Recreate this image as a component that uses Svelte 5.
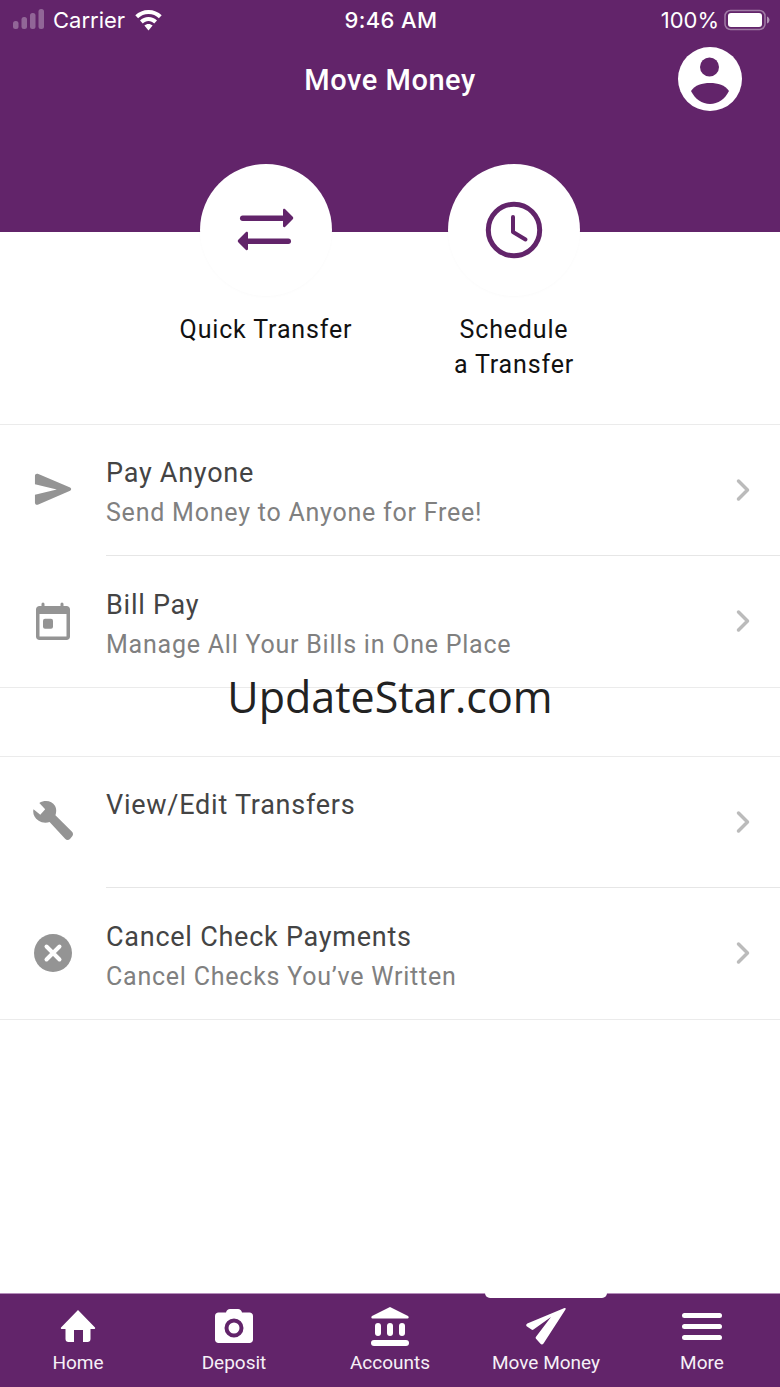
<script lang="ts">
  const rows = [
    [
      { icon: "send", title: "Pay Anyone", sub: "Send Money to Anyone for Free!" },
      { icon: "calendar", title: "Bill Pay", sub: "Manage All Your Bills in One Place" }
    ],
    [
      { icon: "wrench", title: "View/Edit Transfers", sub: "" },
      { icon: "cancel", title: "Cancel Check Payments", sub: "Cancel Checks You’ve Written" }
    ]
  ];
  const tabs = [
    { icon: "home", label: "Home" },
    { icon: "camera", label: "Deposit" },
    { icon: "bank", label: "Accounts" },
    { icon: "plane", label: "Move Money", active: true },
    { icon: "menu", label: "More" }
  ];
</script>

<div class="page">
  <header>
    <div class="status">
      <div class="status-left">
        <svg class="signal" width="34" height="22" viewBox="0 0 34 22">
          <rect x="1" y="12" width="5.500" height="8" rx="2.500" />
          <rect x="9.500" y="8" width="5.500" height="12" rx="2.500" />
          <rect x="18" y="4" width="5.500" height="16" rx="2.500" />
          <rect x="26.500" y="0" width="5.500" height="20" rx="2.500" />
        </svg>
        <span class="carrier">Carrier</span>
        <svg class="wifi" width="29" height="21" viewBox="0 0 28 21" fill="#fff">
          <path d="M14 0C8.800 0 4.200 2 .8 5.200l2.800 3C6.300 5.600 10 4 14 4s7.700 1.600 10.400 4.200l2.800-3C23.800 2 19.200 0 14 0z" />
          <path d="M14 7c-3.300 0-6.300 1.300-8.500 3.400l2.800 3C9.800 12 11.800 11 14 11s4.200 1 5.700 2.400l2.800-3C20.300 8.300 17.300 7 14 7z" />
          <path d="M14 14c-1.600 0-3 .6-4.100 1.600L14 20.500l4.100-4.900C17 14.600 15.600 14 14 14z" />
        </svg>
      </div>
      <span class="time">9:46 AM</span>
      <div class="status-right">
        <span class="pct">100%</span>
        <svg width="46" height="22" viewBox="0 0 46 22">
          <rect x="1" y="1.500" width="40" height="19" rx="5.500" fill="none" stroke="#fff" stroke-opacity="0.4" stroke-width="1.500" />
          <rect x="4" y="4" width="34" height="14" rx="3" fill="#fff" />
          <path d="M43 7.500c1.500.5 2.500 2 2.500 3.500s-1 3-2.500 3.500z" fill="#fff" fill-opacity="0.5" />
        </svg>
      </div>
    </div>
    <div class="title-bar">
      <h1>Move Money</h1>
      <svg class="avatar" width="64" height="64" viewBox="0 0 64 64">
        <circle cx="32" cy="32" r="32" fill="#fff" />
        <circle cx="31.500" cy="20" r="9.500" fill="#62246a" />
        <path d="M13 44C17 38 24 36 32 36s15 2 19 8c-4 8-11 13-19 13s-15-5-19-13z" fill="#62246a" />
      </svg>
    </div>
  </header>

  <section class="actions">
    <div class="action">
      <div class="circle">
        <svg width="60" height="48" viewBox="0 0 60 48" fill="#62246a">
          <rect x="4" y="9.500" width="45" height="5.500" rx="2.700" />
          <path d="M47 4c0-1 1-1.500 2-1l7.500 7.500c1 .9 1 2.100 0 3L49 21c-1 .5-2 0-2-1z" />
          <rect x="6" y="32.500" width="49" height="5.500" rx="2.700" />
          <path d="M12 27c0-1-1-1.500-2-1l-7.500 7.500c-1 .9-1 2.100 0 3L10 44c1 .5 2 0 2-1z" />
        </svg>
      </div>
      <span>Quick Transfer</span>
    </div>
    <div class="action">
      <div class="circle">
        <svg width="58" height="58" viewBox="0 0 58 58" fill="none" stroke="#62246a">
          <circle cx="29" cy="29" r="25.700" stroke-width="5" />
          <path d="M28 16v15l12.500 7.500" stroke-width="4" stroke-linecap="round" stroke-linejoin="round" />
        </svg>
      </div>
      <span>Schedule<br />a Transfer</span>
    </div>
  </section>

  {#each rows as group}
    <ul class="list">
      {#each group as row}
        <li>
          <div class="row-icon">
            {#if row.icon === "send"}
              <svg width="38" height="33" viewBox="0 0 40 34" fill="#949494">
                <path d="M1 2.500C1 .8 2.500 0 4 .5L38 15c1.500.8 1.500 2.600 0 3.300L4 33c-1.500.5-3-.3-3-2v-8.500l23-5.500-23-5.500z" />
              </svg>
            {:else if row.icon === "calendar"}
              <svg width="34" height="38" viewBox="0 0 34 38" fill="#949494">
                <path d="M5.500 4V2a1.500 1.500 0 0 1 3 0v2h16V2a1.500 1.500 0 0 1 3 0v2h3C32.500 4 34 5.500 34 7.500v27c0 2-1.500 3.500-3.500 3.500h-27C1.500 38 0 36.500 0 34.500v-27C0 5.500 1.500 4 3.500 4zM3.500 12v22.500h27V12z" fill-rule="evenodd" />
                <rect x="7" y="16.700" width="10" height="10" rx="2" />
              </svg>
            {:else if row.icon === "wrench"}
              <svg class="wrench" width="41" height="41" viewBox="0 0 42 42" fill="#949494">
                <path d="M1.500 9.500 8.500 15l5-5.500-6-6.500C13 -.5 20.500 .5 23.500 6c1.800 3.500 1.500 6.500.5 9.500l17 17c1.300 1.300 1.300 3.200.2 4.700l-2.300 2.800c-1.500 1.500-3.500 1.500-5-.2L18 22.500c-3.500 1.200-7.800 1-11.500-1.500C2.500 18.500 .5 14 1.500 9.500z" />
              </svg>
            {:else}
              <svg width="38" height="38" viewBox="0 0 38 38">
                <circle cx="19" cy="19" r="19" fill="#949494" />
                <path d="M12.500 12.500l13 13M25.500 12.500l-13 13" stroke="#fff" stroke-width="4" stroke-linecap="round" />
              </svg>
            {/if}
          </div>
          <div class="row-body">
            <div class="row-title">{row.title}</div>
            {#if row.sub}<div class="row-sub">{row.sub}</div>{/if}
          </div>
          <svg class="chevron" width="14" height="24" viewBox="0 0 14 24" fill="none" stroke="#bbb" stroke-width="3.500" stroke-linecap="round" stroke-linejoin="round">
            <path d="M2.500 3l9 9-9 9" />
          </svg>
        </li>
      {/each}
    </ul>
  {/each}

  <nav>
    {#each tabs as tab}
      <div class="tab" class:active={tab.active}>
        <div class="tab-icon">
          {#if tab.icon === "home"}
            <svg width="36" height="32" viewBox="0 0 36 32" fill="#fff">
              <path d="M18 0 35 17.500c.5 .8 0 1.500-1 1.500h-3.500v10c0 1.800-1.200 3-3 3H23V20h-9v12H8.500c-1.800 0-3-1.200-3-3V19H2c-1 0-1.500-.7-1-1.500z" />
            </svg>
          {:else if tab.icon === "camera"}
            <svg width="38" height="34" viewBox="0 0 38 34">
              <path d="M11 3.500C11.500 1.500 13 0 15 0h8c2 0 3.500 1.500 4 3.500h7.500c2 0 3.500 1.500 3.500 3.500v23.500c0 2-1.500 3.500-3.500 3.500h-31C1.500 34 0 32.500 0 30.500V7c0-2 1.500-3.500 3.500-3.500z" fill="#fff" />
              <circle cx="19" cy="19" r="7.500" fill="none" stroke="#62246a" stroke-width="4" />
            </svg>
          {:else if tab.icon === "bank"}
            <svg width="38" height="39" viewBox="0 0 38 39" fill="#fff">
              <path d="M19 0 37 9c1 .6 1 2.500-.5 2.500h-35C0 11.500 0 9.600 1 9z" />
              <rect x="4" y="16" width="6" height="13" rx="3" />
              <rect x="16" y="16" width="6" height="13" rx="3" />
              <rect x="28" y="16" width="6" height="13" rx="3" />
              <rect x="0" y="33" width="38" height="6" rx="3" />
            </svg>
          {:else if tab.icon === "plane"}
            <svg width="40" height="37" viewBox="0 0 40 37" fill="#fff">
              <path d="M38.500 0c1-.2 1.500.5 1 1.500L17.500 35.500c-.8 1.200-2.200 1.200-3 .3l-4.500-5c-.5-.7-.5-1.300 0-2L25 9 7.500 21.500c-.7.500-1.300.5-2 .1L1 18.500c-1.200-.8-1-2.300.3-3z" />
            </svg>
          {:else}
            <svg width="40" height="27" viewBox="0 0 40 27" fill="#fff">
              <rect width="40" height="5" rx="2.500" />
              <rect y="11" width="40" height="5" rx="2.500" />
              <rect y="22" width="40" height="5" rx="2.500" />
            </svg>
          {/if}
        </div>
        <span>{tab.label}</span>
      </div>
    {/each}
  </nav>

  <div class="watermark">UpdateStar.com</div>
</div>

<style>
  :global(body) {
    margin: 0;
    background: #fff;
  }

  .page {
    position: relative;
    display: flex;
    flex-direction: column;
    width: 780px;
    height: 1387px;
    overflow: hidden;
    font-family: Roboto, sans-serif;
  }

  header {
    flex: none;
    height: 232px;
    background: #62246a;
    color: #fff;
  }

  .status {
    display: grid;
    grid-template-columns: 1fr auto 1fr;
    align-items: center;
    height: 40px;
    padding: 0 10px 0 12px;
    font-family: Inter, sans-serif;
    font-size: 22px;
  }

  .status-left,
  .status-right {
    display: flex;
    align-items: center;
  }

  .status-right {
    justify-content: flex-end;
    gap: 5px;
  }

  .signal {
    fill: #fff;
    opacity: 0.3;
    margin-right: 7px;
  }

  .carrier {
    margin-right: 9px;
  }

  .time {
    font-weight: 500;
    letter-spacing: 0.4px;
  }

  .title-bar {
    position: relative;
    display: flex;
    justify-content: center;
    padding-top: 23px;
  }

  h1 {
    margin: 0;
    font-size: 29px;
    line-height: 34px;
    font-weight: 500;
    letter-spacing: 0.55px;
  }

  .avatar {
    position: absolute;
    top: 7px;
    right: 38px;
  }

  .actions {
    flex: none;
    display: flex;
    justify-content: center;
    gap: 116px;
    height: 261px;
    margin-top: -68px;
    box-sizing: border-box;
    border-bottom: 1px solid #ebebeb;
  }

  .action {
    display: flex;
    flex-direction: column;
    align-items: center;
    width: 132px;
    font-size: 25px;
    line-height: 35px;
    letter-spacing: 0.85px;
    color: #111;
    text-align: center;
    white-space: nowrap;
  }

  .circle {
    display: flex;
    align-items: center;
    justify-content: center;
    width: 132px;
    height: 132px;
    margin-bottom: 16px;
    border-radius: 50%;
    background: #fff;
    box-shadow: 0 1px 3px rgba(0, 0, 0, 0.02);
  }

  .list {
    flex: none;
    margin: 0;
    padding: 0;
    list-style: none;
    border-bottom: 1px solid #ebebeb;
  }

  .list + .list {
    margin-top: 68px;
    border-top: 1px solid #ebebeb;
  }

  li {
    position: relative;
    display: flex;
    height: 131px;
  }

  li:first-child::after {
    content: "";
    position: absolute;
    left: 106px;
    right: 0;
    bottom: 0;
    height: 1px;
    background: #e6e6e6;
  }

  .row-icon {
    flex: none;
    display: flex;
    align-items: center;
    justify-content: center;
    width: 106px;
    padding-bottom: 2px;
    box-sizing: border-box;
  }

  .wrench {
    margin: -1px 2px 1px 0;
  }

  .row-body {
    flex: 1;
    padding-top: 31px;
  }

  li + li .row-body {
    padding-top: 31.500px;
  }

  .row-title {
    font-size: 27px;
    line-height: 34px;
    letter-spacing: 0.75px;
    color: #444;
  }

  .row-sub {
    margin-top: 6px;
    font-size: 25px;
    line-height: 34px;
    letter-spacing: 0.77px;
    color: #808080;
  }

  .chevron {
    align-self: center;
    margin: 0 30px 2px 0;
  }

  nav {
    position: absolute;
    left: 0;
    right: 0;
    bottom: 0;
    display: grid;
    grid-template-columns: repeat(5, 156px);
    height: 94px;
    background: #62246a;
    box-shadow: inset 0 1px 0 #b48cba;
  }

  .tab {
    position: relative;
    display: flex;
    flex-direction: column;
    align-items: center;
    color: #f6f0f7;
    font-size: 19px;
  }

  .tab.active::before {
    content: "";
    position: absolute;
    top: 0;
    left: 17px;
    width: 122px;
    height: 5px;
    background: #fff;
    border-radius: 0 0 6px 6px;
  }

  .tab-icon {
    display: flex;
    align-items: center;
    justify-content: center;
    height: 40px;
    margin-top: 13px;
  }

  .tab span {
    margin-top: 5px;
    line-height: 24px;
  }

  .watermark {
    position: absolute;
    top: 669px;
    left: 0;
    right: 0;
    text-align: center;
    font-family: "Open Sans", sans-serif;
    font-size: 43px;
    line-height: 56px;
    color: #222;
  }
</style>
